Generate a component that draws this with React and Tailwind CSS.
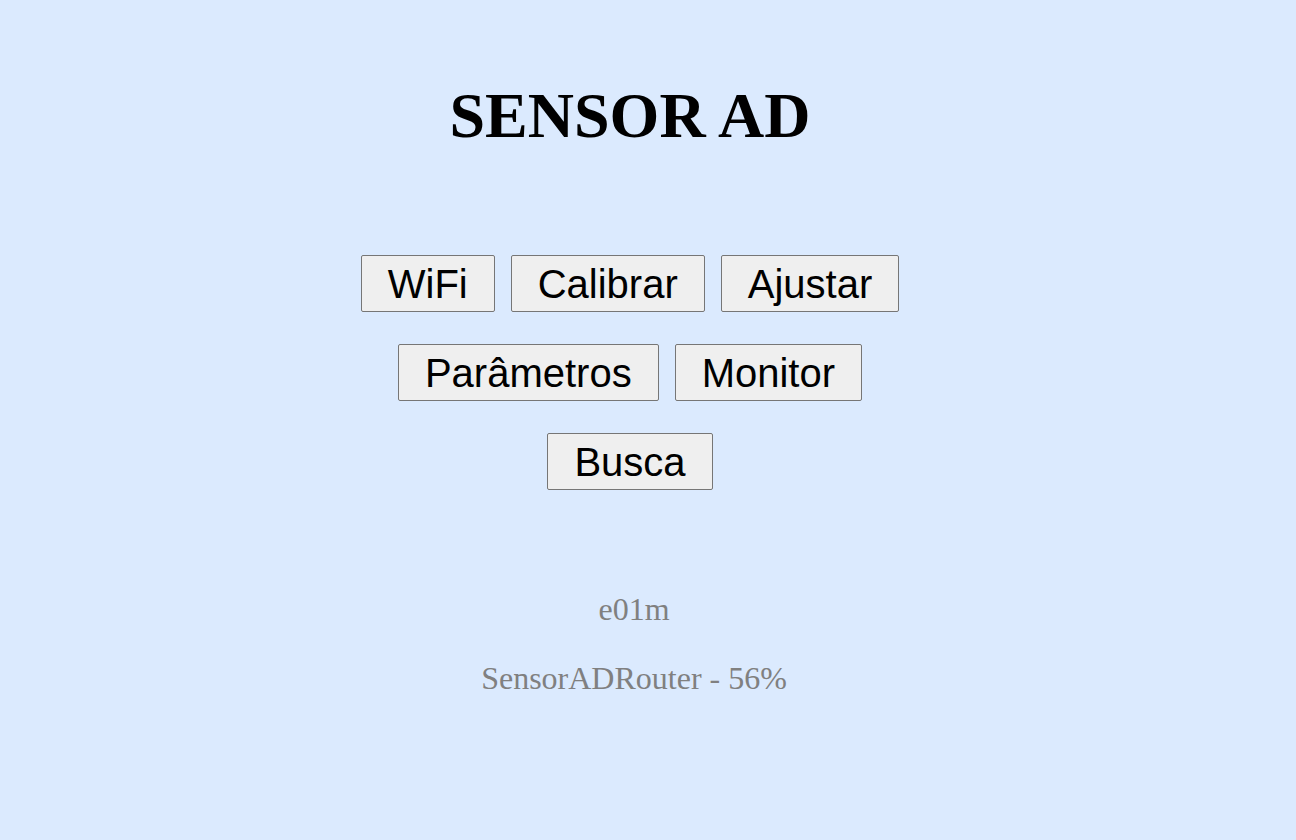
import React from "react";

const rows = [["WiFi", "Calibrar", "Ajustar"], ["Parâmetros", "Monitor"], ["Busca"]];

const App = () => {
  return (
    <div className="min-h-screen w-full bg-[#dbeafe] font-['Liberation_Serif',serif]">
      {/* Title */}
      <div className="pt-[80px] pr-[36px] text-center">
        <h1 className="text-[64px] leading-[71px] font-bold text-black">SENSOR AD</h1>
      </div>

      {/* Menu buttons */}
      <div className="mt-[104px] flex flex-col items-center gap-[32px] pr-[36px]">
        {rows.map((row, i) => (
          <div key={i} className="flex gap-[16px]">
            {row.map((label) => (
              <button
                key={label}
                className="h-[57px] rounded-[2px] border border-[#767676] bg-[#efefef] px-[26px] font-['Liberation_Sans',Arial,sans-serif] text-[40px] leading-[46px] text-black"
              >
                {label}
              </button>
            ))}
          </div>
        ))}
      </div>

      {/* Status */}
      <div className="mt-[102px] pr-[28px] text-center text-[32px] leading-[35px] text-[#808080]">
        <p>e01m</p>
        <p className="mt-[34px]">SensorADRouter - 56%</p>
      </div>
    </div>
  );
};

export default App;
